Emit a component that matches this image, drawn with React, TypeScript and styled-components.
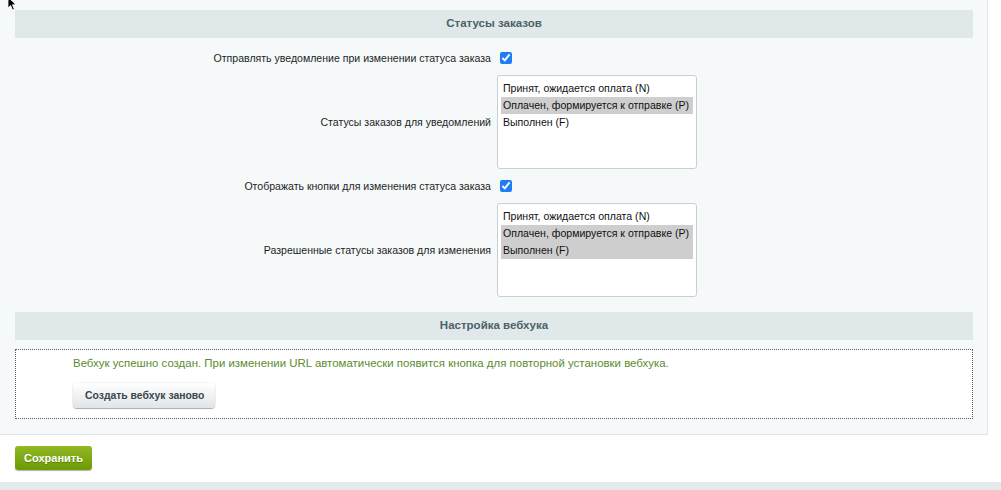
import React from "react";
import styled, { createGlobalStyle } from "styled-components";

const GlobalStyle = createGlobalStyle`
  html, body {
    margin: 0;
    padding: 0;
    background: #ffffff;
  }
  body {
    font-family: "Liberation Sans", Arial, Helvetica, sans-serif;
    font-size: 12px;
    color: #000;
  }
  * { box-sizing: border-box; }
`;

const Page = styled.div`
  position: relative;
  width: 1001px;
  height: 490px;
  overflow: hidden;
  background: #ffffff;
`;

const Panel = styled.div`
  width: 988px;
  padding: 10px 14px 15px 15px;
  background: #f5f9f9;
  border-right: 1px solid #dde5e7;
  border-bottom: 1px solid #dde5e7;
`;

const SectionHeading = styled.div`
  height: 28px;
  line-height: 27px;
  background: #e0e8ea;
  color: #4b6267;
  font-weight: bold;
  font-size: 11.5px;
  text-align: center;
`;

const FormGrid = styled.div`
  padding: 7px 0 11px;
`;

const Row = styled.div`
  display: grid;
  grid-template-columns: 1fr 1fr;
  align-items: center;
  padding: 4px 0;
`;

const Label = styled.div`
  text-align: right;
  padding-right: 3px;
  font-size: 10.55px;
  color: #1e1e1e;
  line-height: 18px;
`;

const Value = styled.div`
  padding-left: 3px;
  display: flex;
  align-items: center;
  min-height: 18px;
`;

const Checkbox = styled.input.attrs({ type: "checkbox" })`
  margin: 0 0 0 3px;
  width: 12px;
  height: 12px;
  accent-color: #1f7cf5;
`;

const ListBox = styled.div`
  width: 200px;
  height: 94px;
  padding: 4px 3px;
  background: #ffffff;
  border: 1px solid #c8d0d3;
  border-radius: 3px;
  overflow: hidden;
`;

const Option = styled.div<{ $selected?: boolean }>`
  height: 17px;
  line-height: 17px;
  padding-left: 2px;
  font-size: 10.55px;
  color: #111;
  white-space: nowrap;
  background: ${(p) => (p.$selected ? "#cecece" : "transparent")};
`;

const WebhookBox = styled.div`
  margin-top: 9px;
  background: #ffffff;
  border: 1px dotted #5e5e5e;
  padding: 5px 0 10px 57px;
`;

const SuccessText = styled.div`
  color: #5b8c2e;
  font-size: 11.45px;
  line-height: 16px;
`;

const GrayButton = styled.button`
  display: block;
  margin-top: 12px;
  height: 25px;
  padding: 0 11px 0 12px;
  border: none;
  border-radius: 4px;
  background: linear-gradient(#ffffff, #dfe5e7);
  box-shadow: 0 1px 1px rgba(0, 0, 0, 0.3), 0 0 0 1px rgba(0, 0, 0, 0.04);
  font-family: inherit;
  font-size: 10.4px;
  font-weight: bold;
  color: #3b464c;
`;

const Footer = styled.div`
  padding: 11px 15px 12px;
`;

const SaveButton = styled.button`
  display: block;
  height: 24px;
  width: 77px;
  padding: 0;
  border: none;
  border-radius: 3px;
  background: linear-gradient(#92b824, #6a9a04);
  box-shadow: 0 1px 1px rgba(0, 0, 0, 0.3);
  font-family: inherit;
  font-size: 11px;
  font-weight: bold;
  color: #ffffff;
  text-shadow: 0 1px 0 rgba(0, 0, 0, 0.25);
`;

const BottomBar = styled.div`
  height: 8px;
  background: #e3eaec;
`;

const Pointer = styled.svg`
  position: absolute;
  left: 7px;
  top: -4px;
  width: 11px;
  height: 15px;
`;

type StatusOption = { label: string; selected: boolean };

const notifyStatuses: StatusOption[] = [
  { label: "Принят, ожидается оплата (N)", selected: false },
  { label: "Оплачен, формируется к отправке (P)", selected: true },
  { label: "Выполнен (F)", selected: false },
];

const editableStatuses: StatusOption[] = [
  { label: "Принят, ожидается оплата (N)", selected: false },
  { label: "Оплачен, формируется к отправке (P)", selected: true },
  { label: "Выполнен (F)", selected: true },
];

function StatusList({ items }: { items: StatusOption[] }) {
  return (
    <ListBox role="listbox" aria-multiselectable="true">
      {items.map((it) => (
        <Option key={it.label} $selected={it.selected} role="option" aria-selected={it.selected}>
          {it.label}
        </Option>
      ))}
    </ListBox>
  );
}

export default function App() {
  return (
    <Page>
      <GlobalStyle />
      <Panel>
        <SectionHeading>Статусы заказов</SectionHeading>
        <FormGrid>
          <Row>
            <Label>Отправлять уведомление при изменении статуса заказа</Label>
            <Value>
              <Checkbox defaultChecked />
            </Value>
          </Row>
          <Row>
            <Label>Статусы заказов для уведомлений</Label>
            <Value>
              <StatusList items={notifyStatuses} />
            </Value>
          </Row>
          <Row>
            <Label>Отображать кнопки для изменения статуса заказа</Label>
            <Value>
              <Checkbox defaultChecked />
            </Value>
          </Row>
          <Row>
            <Label>Разрешенные статусы заказов для изменения</Label>
            <Value>
              <StatusList items={editableStatuses} />
            </Value>
          </Row>
        </FormGrid>
        <SectionHeading>Настройка вебхука</SectionHeading>
        <WebhookBox>
          <SuccessText>
            Вебхук успешно создан. При изменении URL автоматически появится кнопка для повторной установки вебхука.
          </SuccessText>
          <GrayButton type="button">Создать вебхук заново</GrayButton>
        </WebhookBox>
      </Panel>
      <Footer>
        <SaveButton type="button">Сохранить</SaveButton>
      </Footer>
      <BottomBar />
      <Pointer viewBox="0 0 11 15">
        <path d="M1 1 L1 12 L3.6 9.6 L5.6 14 L7.4 13.2 L5.4 8.8 L9 8.8 Z" fill="#000" stroke="#fff" strokeWidth="0.8" />
      </Pointer>
    </Page>
  );
}
